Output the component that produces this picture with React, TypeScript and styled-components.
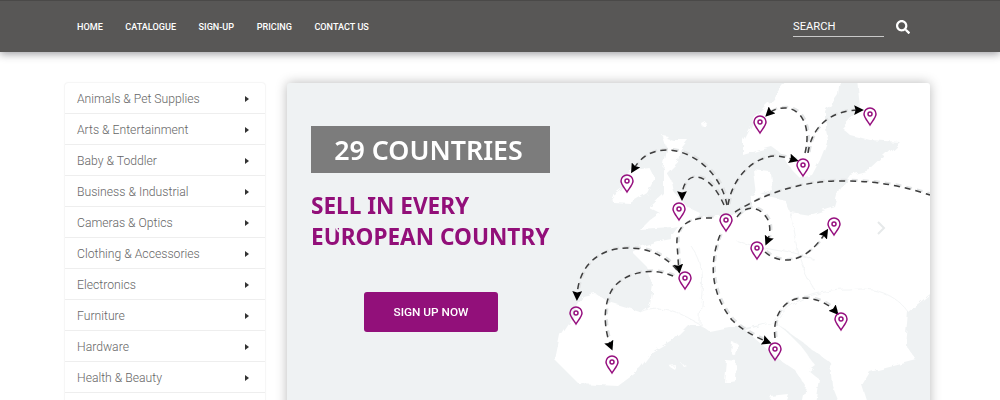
import React from "react";
import styled, { createGlobalStyle } from "styled-components";
import { FaSearch } from "react-icons/fa";

const Global = createGlobalStyle`
  html, body { margin: 0; padding: 0; background: #fff; overflow: hidden; }
  * { box-sizing: border-box; }
`;

const Page = styled.div`
  width: 1000px;
  height: 400px;
  overflow: hidden;
  font-family: Roboto, "Liberation Sans", sans-serif;
`;

const Header = styled.header`
  position: relative;
  z-index: 2;
  height: 52px;
  padding: 0 90px 0 77px;
  display: flex;
  align-items: center;
  justify-content: space-between;
  background: #585756;
  border-top: 1px solid #4a4948;
  box-shadow: 0 2px 8px rgba(40, 40, 50, 0.45);
`;

const Nav = styled.nav`
  display: flex;
  gap: 22.5px;
`;

const NavLink = styled.a`
  color: #fff;
  font-size: 9.1px;
  font-weight: 500;
  line-height: 14px;
`;

const SearchArea = styled.div`
  display: flex;
  align-items: center;
  gap: 12px;
  color: #fff;
`;

const SearchField = styled.div`
  width: 91px;
  height: 20px;
  margin-top: 1px;
  border-bottom: 1px solid #c9c9c9;
  font-size: 11.2px;
  font-weight: 400;
  line-height: 20px;
`;

const Main = styled.main`
  display: flex;
  gap: 22px;
  padding: 31px 70px 0 65px;
`;

const Sidebar = styled.ul`
  flex: 0 0 200px;
  height: 340px;
  margin: 0;
  padding: 0;
  list-style: none;
  background: #fff;
  border-radius: 3px;
  box-shadow: 0 0 2px rgba(0, 0, 0, 0.14);
`;

const Category = styled.li`
  height: 31px;
  padding: 1px 16px 0 12px;
  display: flex;
  align-items: center;
  justify-content: space-between;
  border-bottom: 1px solid #eeeeee;
  color: #666;
  font-size: 12.2px;
  font-weight: 300;
`;

const Caret = styled.span`
  width: 0;
  height: 0;
  border-left: 4px solid #333;
  border-top: 3px solid transparent;
  border-bottom: 3px solid transparent;
`;

const Hero = styled.section`
  position: relative;
  flex: 0 0 643px;
  height: 330px;
  background: #eff2f3;
  border-radius: 3px 3px 0 0;
  box-shadow: 0 0 12px rgba(0, 0, 0, 0.28);
  overflow: hidden;
`;

const MapArt = styled.svg`
  position: absolute;
  inset: 0;
  width: 643px;
  height: 330px;
`;

const HeroContent = styled.div`
  position: relative;
  padding: 43px 0 0 24px;
  width: 290px;
  display: flex;
  flex-direction: column;
  align-items: flex-start;
`;

const Badge = styled.h2`
  width: 239px;
  height: 47px;
  margin: 0;
  padding-right: 4px;
  background: #7c7c7c;
  color: #fff;
  font-family: "Noto Sans", "Open Sans", sans-serif;
  font-size: 26.8px;
  font-weight: 600;
  line-height: 47px;
  text-align: center;
`;

const Headline = styled.h1`
  margin: 17px 0 0;
  color: #920f79;
  font-family: "Noto Sans", "Open Sans", sans-serif;
  font-size: 22.6px;
  font-weight: 700;
  line-height: 31px;
  white-space: nowrap;
`;

const SignUp = styled.button`
  width: 134px;
  height: 40px;
  margin: 40px 0 0 53px;
  padding: 0;
  border: 0;
  border-radius: 3px;
  background: #92107a;
  color: #fff;
  font-family: Roboto, sans-serif;
  font-size: 11.8px;
  font-weight: 500;
`;

const Chevron = styled.svg<{ $left: number; $top: number }>`
  position: absolute;
  left: ${(p) => p.$left}px;
  top: ${(p) => p.$top}px;
`;

const land = [
  "612,197 622,190 623,180 633,170 650,168 655,178 647,193 630,203 613,202",
  "663,137 673,140 688,140 680,150 678,162 667,173 673,183 675,193 687,207 700,213 697,223 673,228 640,230 650,220 660,213 648,207 663,193 663,170 667,150",
  "555,360 560,335 570,320 583,296 595,293 610,303 640,312 650,305 653,285 648,268 632,252 640,247 660,240 670,238 680,224 695,218 730,215 740,215 752,208 750,197 756,192 772,197 785,200 790,212 810,215 835,207 840,190 850,175 870,170 900,142 870,140 850,135 842,128 860,108 857,78 935,78 935,290 908,312 905,345 917,360 870,372 862,385 870,410 842,410 832,385 830,362 815,352 797,338 775,322 745,328 730,328 710,332 700,325 690,325 680,335 652,352 640,368 617,385 578,383",
  "743,155 743,140 753,120 773,100 790,78 840,78 838,95 826,112 826,130 828,140 820,160 812,175 800,178 790,168 783,155 772,147 760,150",
  "753,170 770,172 772,190 756,195",
  "745,330 777,358 795,370 805,385 800,410 815,410 820,380 808,370 815,365 800,345 790,335 775,322",
  "732,342 738,344 736,356 731,354",
  "726,360 737,361 736,380 724,382",
  "770,396 788,394 785,402 772,402",
  "669,366 676,365 674,369",
  "681,363 686,365 683,366",
  "702,124 706,122 707,127 703,128",
  "662,135 668,136 665,139",
];

const borders = [
  "M640,312 C665,300 690,320 702,325",
  "M690,245 C710,270 700,290 700,325",
  "M775,322 C790,300 815,290 850,290 C880,285 900,300 908,312",
  "M790,212 C795,240 800,270 815,290",
  "M735,240 C760,250 790,250 815,260",
];

const routes = [
  "M727,205 C720,170 690,150 667,150 C650,150 640,158 633,170",
  "M724,205 C715,185 705,177 695,177 C688,177 682,185 682,197",
  "M728,205 C733,175 755,157 775,156 C782,156 788,158 795,160",
  "M805,153 C812,125 800,108 785,108 C778,108 772,110 768,114",
  "M808,153 C812,125 832,110 860,110",
  "M735,212 C770,190 810,180 845,181 C880,181 905,187 930,195",
  "M720,235 C708,265 712,295 732,320 C742,330 755,337 768,342",
  "M737,217 C745,205 760,205 768,220 C771,228 770,235 767,242",
  "M765,252 C780,265 805,265 826,232",
  "M775,338 C772,315 785,298 803,298 C815,298 828,303 836,312",
  "M712,218 C695,217 675,222 677,245 C678,255 678,262 679,270",
  "M677,270 C660,250 640,248 627,248 C600,248 578,265 577,297",
  "M673,276 C655,268 628,270 613,288 C602,305 604,330 611,347",
];

const pins: [number, number][] = [
  [627, 181], [679, 209], [726, 220], [760, 122], [803, 165], [870, 114],
  [834, 224], [757, 248], [775, 349], [841, 319], [685, 278], [576, 313], [612, 362],
];

const categories = [
  "Animals & Pet Supplies", "Arts & Entertainment", "Baby & Toddler", "Business & Industrial",
  "Cameras & Optics", "Clothing & Accessories", "Electronics", "Furniture", "Hardware",
  "Health & Beauty",
];

const navItems = ["HOME", "CATALOGUE", "SIGN-UP", "PRICING", "CONTACT US"];

export default function App() {
  return (
    <Page>
      <Global />
      <Header>
        <Nav>
          {navItems.map((n) => <NavLink key={n}>{n}</NavLink>)}
        </Nav>
        <SearchArea>
          <SearchField>SEARCH</SearchField>
          <FaSearch size={14} />
        </SearchArea>
      </Header>
      <Main>
        <Sidebar>
          {categories.map((c) => (
            <Category key={c}>{c}<Caret /></Category>
          ))}
        </Sidebar>
        <Hero>
          <MapArt viewBox="287 83 643 330">
            <defs>
              <marker id="head" viewBox="0 0 10 10" refX="6" refY="5" markerWidth="6.5" markerHeight="6.5" markerUnits="strokeWidth" orient="auto">
                <path d="M0,0 L10,5 L0,10 L1.5,5 Z" fill="#000" />
              </marker>
              <filter id="soft" x="-5%" y="-5%" width="110%" height="110%">
                <feTurbulence type="fractalNoise" baseFrequency="0.09" numOctaves="3" seed="4" result="noise" />
                <feDisplacementMap in="SourceGraphic" in2="noise" scale="7" result="moved" />
                <feGaussianBlur in="moved" stdDeviation="0.7" />
              </filter>
              <filter id="blurLine"><feGaussianBlur stdDeviation="0.25" /></filter>
            </defs>
            <g filter="url(#soft)">
              {land.map((p) => <polygon key={p} points={p} fill="#fff" />)}
              {borders.map((d) => <path key={d} d={d} fill="none" stroke="#f3f5f6" strokeWidth="1" />)}
            </g>
            <g filter="url(#blurLine)">
              {routes.map((d) => (
                <path key={"s" + d} d={d} fill="none" stroke="#e2e4e5" strokeWidth="2.4" strokeDasharray="6 5" transform="translate(1.5,-1)" />
              ))}
              {routes.map((d) => (
                <path key={d} d={d} fill="none" stroke="#3e3e3e" strokeWidth="1.5" strokeDasharray="6 5" markerEnd={d.includes("930,195") ? undefined : "url(#head)"} />
              ))}
            </g>
            {pins.map(([x, y]) => (
              <g key={x} fill="none" stroke="#96107f" strokeWidth="1.5">
                <path d={`M${x},${y + 11} C${x - 2},${y + 7.5} ${x - 6},${y + 3.5} ${x - 6},${y} A6,6 0 1 1 ${x + 6},${y} C${x + 6},${y + 3.5} ${x + 2},${y + 7.5} ${x},${y + 11} Z`} />
                <circle cx={x} cy={y} r="2" />
              </g>
            ))}
          </MapArt>
          <HeroContent>
            <Badge>29 COUNTRIES</Badge>
            <Headline>SELL IN EVERY<br />EUROPEAN COUNTRY</Headline>
            <SignUp>SIGN UP NOW</SignUp>
          </HeroContent>
          <Chevron $left={47} $top={136} width="6" height="14" viewBox="0 0 6 14">
            <path d="M5,1 L1,7 L5,13" fill="none" stroke="#f0f2f4" strokeWidth="2" />
          </Chevron>
          <Chevron $left={589} $top={138} width="10" height="14" viewBox="0 0 10 14">
            <path d="M2,1 L8,7 L2,13" fill="none" stroke="#e6e9ea" strokeWidth="2" />
          </Chevron>
        </Hero>
      </Main>
    </Page>
  );
}
